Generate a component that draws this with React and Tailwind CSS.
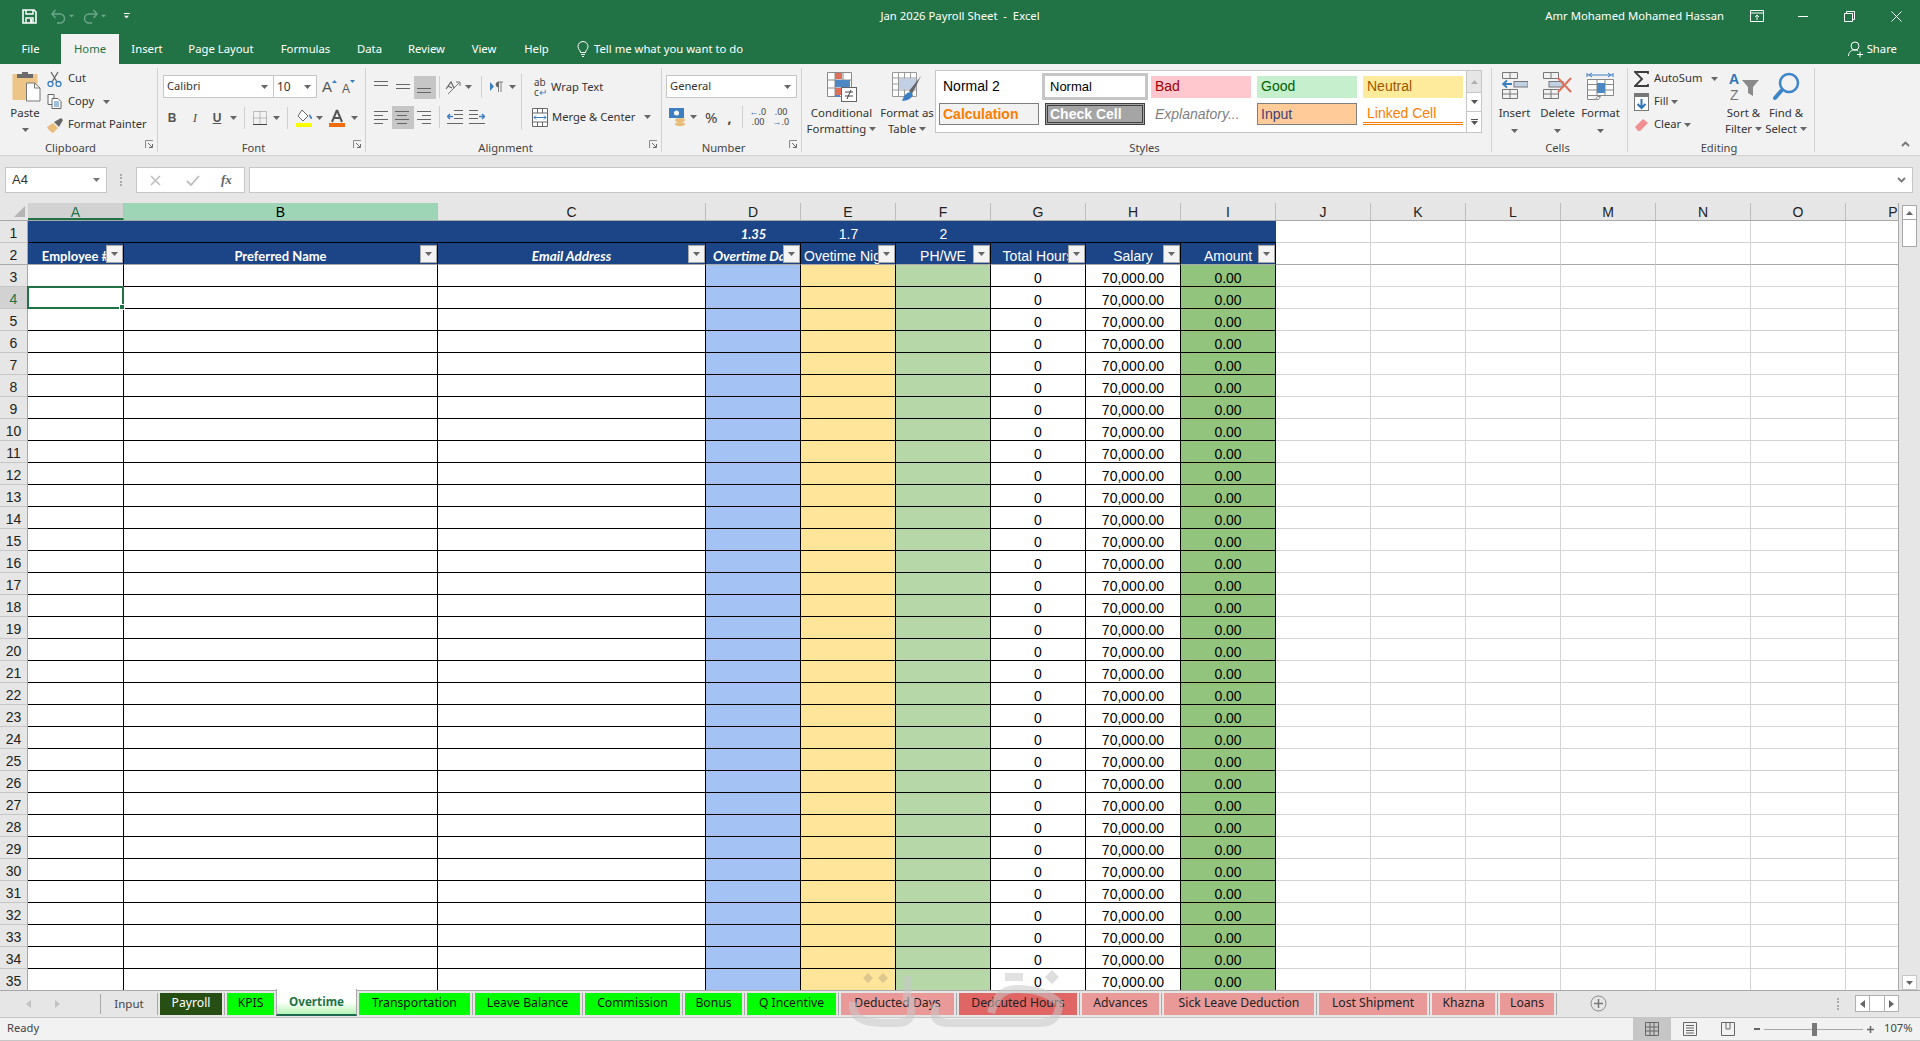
import React from "react";

const Caret = ({ c = "#666", className = "" }) => (
  <svg width="7" height="4" viewBox="0 0 7 4" className={"shrink-0 " + className}><path d="M0 0h7L3.500 4z" fill={c} /></svg>
);

const Launcher = () => (
  <svg width="9" height="9" viewBox="0 0 9 9" className="absolute right-[3px] bottom-[3px]">
    <path d="M0.500 8V0.500H8" fill="none" stroke="#8a8a8a" /><path d="M3 3l4 4M4 7.500h3.500V4" fill="none" stroke="#6a6a6a" />
  </svg>
);

const Group = ({ w, label, children }) => {
  const launch = label !== "Styles" && label !== "Cells" && label !== "Editing";
  return (
    <div className="flex shrink-0 h-[84px]">
      <div className={"relative flex flex-col " + w}>
        <div className="h-[72px] shrink-0">{children}</div>
        <div className={"shrink-0 h-[16px] text-center text-[11.2px] leading-[16px] text-[#444] " + (launch ? "pr-[16px]" : "pr-[4px]")}>{label}</div>
        {launch ? <Launcher /> : null}
      </div>
      <div className="w-px h-[84px] bg-[#d2d2d2]" />
    </div>
  );
};

const Sep = ({ className = "" }) => <div className={"w-px h-[22px] bg-[#d0d0d0] shrink-0 " + className} />;

const Lines = ({ rows }) => (
  <svg width="16" height="14" viewBox="0 0 16 14">
    {rows.map((r, i) => <rect key={i} x={r[0]} y={r[1]} width={r[2]} height="1" fill="#666" />)}
  </svg>
);

const Save = () => (
  <svg width="15" height="15" viewBox="0 0 15 15"><path d="M1 1h11l2 2v11H1z" fill="none" stroke="#fff" strokeWidth="1.600" /><path d="M4 1v4h7V1M4 14V9h7v5" fill="none" stroke="#fff" strokeWidth="1.400" /><rect x="8" y="10" width="2" height="4" fill="#fff" /></svg>
);
const Undo = ({ flip }) => (
  <svg width="15" height="15" viewBox="0 0 15 15" className={flip ? "-scale-x-100" : ""}><path d="M1 5h8a4.500 4.500 0 0 1 0 9H6" fill="none" stroke="#6fa78c" strokeWidth="1.400" /><path d="M4.500 1L1 5l3.500 4" fill="none" stroke="#6fa78c" strokeWidth="1.400" /></svg>
);

const PasteIcon = () => (
  <svg width="30" height="30" viewBox="0 0 30 30">
    <rect x="0.500" y="2" width="25" height="26" rx="1" fill="#edc587" />
    <rect x="5" y="2" width="16" height="4" fill="#6b6b6b" /><rect x="10" y="0" width="6" height="3" fill="#6b6b6b" />
    <path d="M14.500 11h8l5.500 5v13h-13.500z" fill="#fff" stroke="#777" /><path d="M22.500 11v5h5.500" fill="none" stroke="#777" />
  </svg>
);
const Scissors = () => (
  <svg width="15" height="16" viewBox="0 0 15 16"><path d="M4 1l6 10M11 1L5 11" stroke="#666" strokeWidth="1.300" /><circle cx="3.500" cy="13" r="2.500" fill="none" stroke="#3c7fc0" strokeWidth="1.300" /><circle cx="11.500" cy="13" r="2.500" fill="none" stroke="#3c7fc0" strokeWidth="1.300" /></svg>
);
const CopyIcon = () => (
  <svg width="15" height="15" viewBox="0 0 15 15"><path d="M1 .5h6v10H1z" fill="#fff" stroke="#666" /><path d="M5 4.500h6l3 3v7H5z" fill="#fff" stroke="#666" /><path d="M7 8h5M7 10h5M7 12h5" stroke="#3c7fc0" /></svg>
);
const Brush = () => (
  <svg width="17" height="16" viewBox="0 0 17 16"><path d="M0 10l6-4 5 5-5 5c-2-1-5-3-6-6z" fill="#e8bd7a" /><path d="M7 5l5 5 4-7-2-2z" fill="#666" /></svg>
);
const Grow = ({ up }) => (
  <span className="flex items-start">
    <span className={"font-['Liberation_Sans',sans-serif] leading-none text-[#555] " + (up ? "text-[15px]" : "text-[12px] mt-[4px]")}>A</span>
    <svg width="5" height="3" viewBox="0 0 5 3" className="mt-[1px]"><path d={up ? "M0 3h5L2.500 0z" : "M0 0h5L2.500 3z"} fill="#3c7fc0" /></svg>
  </span>
);
const Borders = () => (
  <svg width="14" height="14" viewBox="0 0 14 14"><path d="M.5 .5h13v13h-13zM7 .5v13M.5 7h13" fill="none" stroke="#888" strokeDasharray="1 1" /><path d="M0 13.500h14" stroke="#444" /></svg>
);
const Fill = () => (
  <svg width="17" height="19" viewBox="0 0 17 19"><path d="M6 1l6 6-5 5-5-5z" fill="#fff" stroke="#666" /><path d="M13 5c2 1 3 3 3 5-2 0-3-2-3-5z" fill="#3c7fc0" /><rect x="0" y="14" width="16" height="4" fill="#ffff00" /></svg>
);
const FontColor = () => (
  <svg width="17" height="19" viewBox="0 0 17 19"><path d="M8 1L3 13M8 1l5 12M5 9h6" fill="none" stroke="#555" strokeWidth="2" /><rect x="0" y="14" width="16" height="4" fill="#f26b0f" /></svg>
);
const Orient = () => (
  <svg width="17" height="15" viewBox="0 0 17 15"><path d="M1 9l5-7 3 6M3 6l4 2" fill="none" stroke="#666" strokeWidth="1.200" /><path d="M3 14L14 3" stroke="#777" /><path d="M11 2h4v4" fill="none" stroke="#777" /></svg>
);
const Rtl = () => (
  <svg width="14" height="12" viewBox="0 0 14 12"><path d="M0 1v9l4-4.500z" fill="#3c7fc0" /><path d="M8 1h5M11 1v10M8.500 1v10M6 3.500a2.500 2.500 0 0 1 2.500-2.500v5A2.500 2.500 0 0 1 6 3.500z" fill="#666" stroke="#666" strokeWidth="0.800" /></svg>
);
const Outdent = ({ flip }) => (
  <svg width="16" height="14" viewBox="0 0 16 14" className={flip ? "-scale-x-100" : ""}><path d="M7 .5h9M7 4.500h9M7 8.500h9M0 13.500h16" stroke="#666" /><path d="M0 6.500h6M3 4L.5 6.500 3 9" fill="none" stroke="#3c7fc0" strokeWidth="1.500" /></svg>
);
const Wrap = () => (
  <span className="w-[14px] flex flex-col text-[10px] leading-[10px] text-[#444]"><span>ab</span><span>c<span className="text-[#3c7fc0]">↵</span></span></span>
);
const Merge = () => (
  <svg width="16" height="19" viewBox="0 0 16 19"><path d="M.5 .5h15v18H.5zM.5 5h15M.5 14h15M5.500 .5V5M10.500 .5V5M5.500 14v4.500M10.500 14v4.500" fill="#fff" stroke="#666" /><path d="M2 9.500h12M4 7.500l-2 2 2 2M12 7.500l2 2-2 2" fill="none" stroke="#3c7fc0" /></svg>
);
const Money = () => (
  <svg width="17" height="19" viewBox="0 0 17 19"><rect x="0" y="0" width="15" height="10" fill="#3c7fc0" /><circle cx="7.500" cy="5" r="2.500" fill="#fff" /><ellipse cx="11" cy="12" rx="5" ry="2" fill="#e8bd7a" /><ellipse cx="11" cy="16" rx="5" ry="2" fill="#e8bd7a" /></svg>
);
const Cond = () => (
  <svg width="30" height="30" viewBox="0 0 30 30">
    <path d="M.5 .5h24v24H.5zM8 .5v24M16 .5v24M.5 8h24M.5 16h24" fill="#fff" stroke="#8a8a8a" />
    <rect x="8" y="1" width="7" height="6" fill="#e0705a" /><rect x="8" y="8" width="15" height="7" fill="#4d87c4" /><rect x="8" y="16" width="7" height="7" fill="#e0705a" /><rect x="8" y="23" width="5" height="2" fill="#4d87c4" />
    <rect x="14.500" y="15.500" width="15" height="14" fill="#fff" stroke="#666" /><path d="M18 20h8M18 24h8M24 18l-4 9" stroke="#444" />
  </svg>
);
const FmtTable = () => (
  <svg width="30" height="30" viewBox="0 0 30 30">
    <path d="M.5 .5h24v24H.5zM.5 6h24M.5 12h24M.5 18h24M6.500 .5v24M12.500 .5v24M18.500 .5v24" fill="#fff" stroke="#999" />
    <rect x="7" y="6.500" width="17" height="11" fill="#c2d0e6" />
    <path d="M29 4L17 19l3 3z" fill="#666" /><path d="M10 29c2-6 5-9 9-9l2 3c-1 3-6 6-11 6z" fill="#3c7fc0" />
  </svg>
);
const InsertI = () => (
  <svg width="26" height="27" viewBox="0 0 26 27">
    <path d="M.5 .5h15v6h-15zM8 .5v6M.5 17.500h15v9h-15zM.5 22h15M8 17.500v9" fill="none" stroke="#777" />
    <rect x="12" y="9.500" width="14" height="5.500" fill="#c2d0e6" stroke="#777" />
    <path d="M1 12h9M5 8.500L1 12l4 3.500" fill="none" stroke="#3c7fc0" strokeWidth="1.800" />
  </svg>
);
const DeleteI = () => (
  <svg width="30" height="27" viewBox="0 0 30 27">
    <path d="M.5 .5h15v6h-15zM8 .5v6M.5 17.500h15v9h-15zM.5 22h15M8 17.500v9" fill="none" stroke="#777" />
    <rect x="6" y="9.500" width="14" height="5.500" fill="#c2d0e6" stroke="#777" />
    <path d="M15 6l13 14M28 6L15 20" stroke="#e0705a" strokeWidth="2" />
  </svg>
);
const FormatI = () => (
  <svg width="29" height="28" viewBox="0 0 29 28">
    <path d="M1 3h26M1 1v4M27 1v4M3 3l3-2M3 3l3 2M25 3l-3-2M25 3l-3 2" fill="none" stroke="#3c7fc0" />
    <path d="M1.500 7.500h26v16h-26zM11 7.500v16M19 7.500v16M1.500 12.500h26M1.500 18h26M1.500 23.500v4h8l2-3h3l-2 3h-3" fill="#fff" stroke="#888" />
    <rect x="11" y="11" width="8" height="10" fill="#4d87c4" />
  </svg>
);
const Sigma = () => (
  <svg width="15" height="16" viewBox="0 0 15 16"><path d="M14 3V1H1l7 7-7 7h13v-2" fill="none" stroke="#3c3c3c" strokeWidth="1.800" /></svg>
);
const FillD = () => (
  <svg width="15" height="18" viewBox="0 0 15 18"><rect x=".5" y=".5" width="14" height="17" fill="#fff" stroke="#777" /><rect x="1" y="1" width="13" height="3" fill="#777" /><path d="M7.500 6v9M3.500 11l4 4 4-4" fill="none" stroke="#2e75b6" strokeWidth="2" /></svg>
);
const Eraser = () => (
  <svg width="15" height="14" viewBox="0 0 15 14"><path d="M1 9l8-8 5 4-8 8H4z" fill="#ef8f8f" /></svg>
);
const SortI = () => (
  <svg width="30" height="29" viewBox="0 0 30 29">
    <text x="0" y="12" fontSize="14" fontWeight="700" fontFamily="Liberation Sans" fill="#2e75b6">A</text>
    <text x="1" y="28" fontSize="14" fontFamily="Liberation Sans" fill="#777">Z</text>
    <path d="M13 8h17l-6 7v9l-5-3v-6z" fill="#8a8a8a" />
  </svg>
);
const FindI = () => (
  <svg width="27" height="29" viewBox="0 0 27 29"><circle cx="16" cy="11" r="9" fill="none" stroke="#3c85c8" strokeWidth="2.500" /><path d="M9 18L2 26" stroke="#3c85c8" strokeWidth="4" strokeLinecap="round" /></svg>
);
const Chevron = ({ up }) => (
  <svg width="9" height="6" viewBox="0 0 9 6"><path d={up ? "M1 5l3.500-3.500L8 5" : "M1 1l3.500 3.500L8 1"} fill="none" stroke="#777" strokeWidth="1.800" /></svg>
);

function Ribbon() {
  return (
    <div className="flex h-[92px] pt-[4px] bg-[#f2f2f2] border-b border-[#d2d2d2] text-[11.2px] text-[#333] relative">
      <Group w="w-[157px]" label="Clipboard">
        <div className="flex">
          <div className="w-[47px] flex flex-col items-center pl-[6px]">
            <div className="mt-[4px]"><PasteIcon /></div>
            <div className="mt-[3px] -ml-[3px] text-[11.4px] leading-[16px]">Paste</div>
            <Caret className="mt-[7px] -ml-[3px]" />
          </div>
          <div className="flex flex-col -mt-[1px]">
            <div className="h-[23px] flex items-center"><span className="w-[21px] flex"><Scissors /></span>Cut</div>
            <div className="h-[23px] flex items-center"><span className="w-[21px] flex"><CopyIcon /></span>Copy<Caret className="ml-[9px]" /></div>
            <div className="h-[23px] flex items-center"><span className="w-[21px] flex"><Brush /></span>Format Painter</div>
          </div>
        </div>
      </Group>
      <Group w="w-[207px]" label="Font">
        <div className="flex flex-col pt-[7px] pl-[5px]">
          <div className="flex items-center h-[23px]">
            <div className="w-[111px] h-[23px] bg-white border border-[#c6c6c6] flex items-center justify-between pl-[3px] pr-[5px]">Calibri<Caret /></div>
            <div className="w-[43px] h-[23px] bg-white border border-l-0 border-[#c6c6c6] flex items-center justify-between pl-[3px] pr-[5px] text-[12px]">10<Caret /></div>
            <div className="ml-[5px] w-[21px]"><Grow up /></div>
            <div className="-ml-[1px]"><Grow /></div>
          </div>
          <div className="flex items-center h-[22px] mt-[9px]">
            <span className="w-[20px] -ml-[1px] text-center font-bold text-[12px] font-['Liberation_Sans',sans-serif] text-[#555]">B</span>
            <span className="w-[24px] ml-[1px] text-center italic text-[13px] font-['Liberation_Serif',serif] text-[#555]">I</span>
            <span className="w-[20px] text-center underline font-bold text-[12px] font-['Liberation_Sans',sans-serif] text-[#555]">U</span>
            <Caret className="ml-[3px]" />
            <Sep className="ml-[7px]" />
            <span className="ml-[8px] flex"><Borders /></span>
            <Caret className="ml-[6px]" />
            <Sep className="ml-[7px]" />
            <span className="ml-[8px] flex"><Fill /></span>
            <Caret className="ml-[3px]" />
            <span className="ml-[6px] flex"><FontColor /></span>
            <Caret className="ml-[5px]" />
          </div>
        </div>
      </Group>
      <Group w="w-[295px]" label="Alignment">
        <div className="flex pl-[8px]">
          <div className="flex flex-col">
            <div className="flex items-center h-[24px] mt-[7px]">
              <span className="w-[22px] flex"><Lines rows={[[0, 1, 14], [0, 5, 14]]} /></span>
              <span className="w-[18px] flex"><Lines rows={[[0, 4, 14], [0, 8, 14]]} /></span>
              <span className="w-[22px] h-[23px] bg-[#c6c6c6] flex items-center justify-center"><Lines rows={[[0, 8, 14], [0, 12, 14]]} /></span>
              <Sep className="ml-[3px]" />
              <span className="ml-[5px] flex"><Orient /></span>
              <Caret className="ml-[3px]" />
              <Sep className="ml-[9px]" />
              <span className="ml-[8px] flex"><Rtl /></span>
              <Caret className="ml-[5px]" />
            </div>
            <div className="flex items-center h-[24px] mt-[6px]">
              <span className="w-[18px] flex"><Lines rows={[[0, 1, 14], [0, 5, 9], [0, 9, 14], [0, 13, 9]]} /></span>
              <span className="w-[22px] h-[23px] bg-[#c6c6c6] flex items-center justify-center"><Lines rows={[[0, 1, 14], [2, 5, 10], [0, 9, 14], [2, 13, 10]]} /></span>
              <span className="w-[22px] pl-[3px] flex"><Lines rows={[[0, 1, 14], [5, 5, 9], [0, 9, 14], [5, 13, 9]]} /></span>
              <Sep className="ml-[3px]" />
              <span className="ml-[7px] flex"><Outdent /></span>
              <span className="ml-[6px] flex"><Outdent flip /></span>
            </div>
          </div>
          <div className="flex flex-col ml-[9px] relative">
            <div className="w-px h-[56px] bg-[#d0d0d0] absolute -left-[4px] top-[6px]" />
            <div className="flex items-center h-[24px] mt-[7px] pl-[9px]"><Wrap /><span className="ml-[3px] leading-none whitespace-nowrap">Wrap Text</span></div>
            <div className="flex items-center h-[24px] mt-[6px] pl-[7px]"><Merge /><span className="ml-[4px] whitespace-nowrap">Merge &amp; Center</span><Caret className="ml-[9px]" /></div>
          </div>
        </div>
      </Group>
      <Group w="w-[139px]" label="Number">
        <div className="flex flex-col pt-[7px] pl-[4px]">
          <div className="w-[131px] h-[23px] bg-white border border-[#c6c6c6] flex items-center justify-between pl-[3px] pr-[5px]">General<Caret /></div>
          <div className="flex items-center h-[22px] mt-[8px] pl-[3px]">
            <Money /><Caret className="ml-[4px]" />
            <span className="ml-[8px] text-[15px] text-[#444]">%</span>
            <span className="ml-[10px] font-bold text-[14px] text-[#444]">,</span>
            <Sep className="ml-[11px]" />
            <span className="ml-[6px] text-[9px] leading-[10px] text-right text-[#444] w-[15px]"><span className="text-[#3c7fc0]">←</span>.0<br />.00</span>
            <span className="ml-[8px] text-[9px] leading-[10px] text-right text-[#444] w-[15px]">.00<br /><span className="text-[#3c7fc0]">→</span>.0</span>
          </div>
        </div>
      </Group>
      <Group w="w-[689px]" label="Styles">
        <div className="flex">
          <div className="w-[79px] flex flex-col items-center leading-[16px] text-[11.4px]">
            <div className="mt-[4px] h-[33px]"><Cond /></div>
            <div className="text-center whitespace-nowrap">Conditional<br />Formatting<Caret className="inline-block ml-[3px] mb-[2px]" /></div>
          </div>
          <div className="w-[52px] flex flex-col items-center leading-[16px] text-[11.4px]">
            <div className="mt-[4px] h-[33px]"><FmtTable /></div>
            <div className="text-center whitespace-nowrap">Format as<br />Table<Caret className="inline-block ml-[3px] mb-[2px]" /></div>
          </div>
          <div className="ml-[2px] mt-[2px] w-[547px] h-[63px] bg-white border border-[#c6c6c6] flex">
            <div className="flex flex-col w-[531px] pl-[3px] font-['Liberation_Sans',sans-serif] text-[14px]">
              <div className="flex items-center h-[30px] pt-[1px]">
                <div className="w-[103px] h-[22px] flex items-center pl-[4px] text-black">Normal 2</div>
                <div className="w-[106px] h-[27px] border-[3px] border-[#c6c6c6] flex items-center pl-[5px] text-black text-[13px]">Normal</div>
                <div className="ml-[3px] w-[100px] h-[22px] bg-[#ffc7ce] text-[#9c0006] flex items-center pl-[4px]">Bad</div>
                <div className="ml-[6px] w-[100px] h-[22px] bg-[#c6efce] text-[#006100] flex items-center pl-[4px]">Good</div>
                <div className="ml-[6px] w-[100px] h-[22px] bg-[#ffeb9c] text-[#9c5700] flex items-center pl-[4px]">Neutral</div>
              </div>
              <div className="flex items-center h-[24px] mt-[1px]">
                <div className="w-[100px] h-[22px] bg-[#f2f2f2] border border-[#7f7f7f] text-[#fa7d00] font-bold flex items-center pl-[3px]">Calculation</div>
                <div className="ml-[6px] w-[100px] h-[22px] bg-[#a5a5a5] border-[3px] border-double border-[#3f3f3f] text-white font-bold flex items-center pl-[2px]">Check Cell</div>
                <div className="w-[112px] h-[22px] text-[#7f7f7f] italic flex items-center pl-[10px]">Explanatory...</div>
                <div className="w-[100px] h-[22px] bg-[#ffcc99] border border-[#7f7f7f] text-[#3f3f76] flex items-center pl-[3px]">Input</div>
                <div className="ml-[6px] w-[100px] h-[22px] border-b-[3px] border-double border-[#fa7d00] text-[#fa7d00] flex items-center pl-[4px] pt-[2px]">Linked Cell</div>
              </div>
            </div>
            <div className="w-[15px] flex flex-col border-l border-[#c6c6c6]">
              <div className="h-[21px] bg-[#e6e6e6] flex items-center justify-center"><Caret c="#b0b0b0" className="rotate-180" /></div>
              <div className="h-[20px] border-y border-[#c6c6c6] flex items-center justify-center"><Caret c="#555" /></div>
              <div className="h-[20px] flex flex-col items-center justify-center"><div className="w-[7px] h-px bg-[#555] mb-[1px]" /><Caret c="#555" /></div>
            </div>
          </div>
        </div>
      </Group>
      <Group w="w-[135px]" label="Cells">
        <div className="flex pl-[1px] leading-[16px] text-[11.4px]">
          <div className="w-[43px] flex flex-col items-center"><div className="mt-[4px] h-[33px]"><InsertI /></div>Insert<Caret className="mt-[8px]" /></div>
          <div className="w-[43px] flex flex-col items-center"><div className="mt-[4px] h-[33px]"><DeleteI /></div>Delete<Caret className="mt-[8px]" /></div>
          <div className="w-[43px] flex flex-col items-center"><div className="mt-[4px] h-[33px]"><FormatI /></div>Format<Caret className="mt-[8px]" /></div>
        </div>
      </Group>
      <Group w="w-[186px]" label="Editing">
        <div className="flex">
          <div className="flex flex-col pl-[6px] w-[94px] -mt-[1px]">
            <div className="h-[23px] flex items-center"><span className="w-[20px] flex"><Sigma /></span>AutoSum<Caret className="ml-[9px]" /></div>
            <div className="h-[23px] flex items-center"><span className="w-[20px] flex"><FillD /></span>Fill<Caret className="ml-[3px]" /></div>
            <div className="h-[23px] flex items-center"><span className="w-[20px] flex"><Eraser /></span>Clear<Caret className="ml-[3px]" /></div>
          </div>
          <div className="w-[43px] flex flex-col items-center leading-[16px] text-[11.4px]"><div className="mt-[4px] h-[33px]"><SortI /></div><div className="text-center whitespace-nowrap">Sort &amp;<br />Filter<Caret className="inline-block ml-[3px] mb-[2px]" /></div></div>
          <div className="w-[42px] flex flex-col items-center leading-[16px] text-[11.4px]"><div className="mt-[4px] h-[33px]"><FindI /></div><div className="text-center whitespace-nowrap">Find &amp;<br />Select<Caret className="inline-block ml-[3px] mb-[2px]" /></div></div>
        </div>
      </Group>
      <div className="ml-auto self-end mb-[8px] mr-[10px]"><Chevron up /></div>
    </div>
  );
}

const ribbonTabs = [
  ["File", "w-[61px]"], ["Home", "w-[58px]"], ["Insert", "w-[56px]"], ["Page Layout", "w-[92px]"], ["Formulas", "w-[77px]"],
  ["Data", "w-[51px]"], ["Review", "w-[63px]"], ["View", "w-[52px]"], ["Help", "w-[53px]"],
];

function TitleBar() {
  return (
    <div className="bg-[#217346] text-white h-[64px] shrink-0 text-[11.3px]">
      <div className="grid grid-cols-[1fr_auto_1fr] items-center h-[34px]">
        <div className="flex items-center pl-[22px] pb-[2px]">
          <Save />
          <span className="ml-[14px] flex"><Undo /></span><Caret c="#6fa78c" className="ml-[2px] scale-75" />
          <span className="ml-[8px] flex"><Undo flip /></span><Caret c="#6fa78c" className="ml-[2px] scale-75" />
          <span className="ml-[16px] flex flex-col items-center"><span className="w-[6px] h-px bg-white mb-[1px]" /><Caret c="#fff" className="scale-75" /></span>
        </div>
        <div className="pb-[2px] whitespace-pre">Jan 2026 Payroll Sheet  -  Excel</div>
        <div className="flex items-center justify-end pb-[2px]">
          <span>Amr Mohamed Mohamed Hassan</span>
          <svg width="14" height="12" viewBox="0 0 14 12" className="ml-[26px]"><path d="M.5 .5h13v11H.5zM.5 3h13M7 10V5M5 7l2-2 2 2" fill="none" stroke="#fff" /></svg>
          <span className="ml-[34px] w-[10px] h-px bg-white" />
          <svg width="11" height="11" viewBox="0 0 11 11" className="ml-[36px]"><path d="M.5 2.500h8v8h-8zM2.500 2.500v-2h8v8h-2" fill="none" stroke="#fff" /></svg>
          <svg width="11" height="11" viewBox="0 0 11 11" className="ml-[36px] mr-[18px]"><path d="M.5 .5l10 10M10.500 .5l-10 10" stroke="#fff" /></svg>
        </div>
      </div>
      <div className="flex items-center h-[30px]">
        {ribbonTabs.map(([t, w]) => (
          <div key={t} className={w + " h-[30px] flex items-center justify-center " + (t === "Home" ? "bg-[#f2f2f2] text-[#217346]" : "")}>{t}</div>
        ))}
        <svg width="12" height="17" viewBox="0 0 12 17" className="ml-[14px]"><path d="M3.500 11.500C3.500 9 1 8.500 1 5.500a5 5 0 0 1 10 0c0 3-2.500 3.500-2.500 6zM4 13.500h4M5 15.500h2" fill="none" stroke="#fff" /></svg>
        <span className="ml-[5px]">Tell me what you want to do</span>
        <div className="ml-auto flex items-center pr-[23px]">
          <svg width="15" height="17" viewBox="0 0 15 17"><circle cx="7" cy="5" r="4" fill="none" stroke="#fff" /><path d="M.5 15c0-4 3-6 6.500-6 1 0 2 .2 3 .8M9 13.500h6M12 10.500v6" fill="none" stroke="#fff" /></svg>
          <span className="ml-[4px]">Share</span>
        </div>
      </div>
    </div>
  );
}

function FormulaBar() {
  return (
    <div className="h-[47px] bg-[#e6e6e6] flex pt-[11px] shrink-0 font-['Liberation_Sans',sans-serif]">
      <div className="ml-[5px] w-[102px] h-[26px] bg-white border border-[#c6c6c6] flex items-center justify-between pl-[6px] pr-[6px] text-[13px] text-[#333]">A4<Caret c="#777" /></div>
      <div className="ml-[13px] w-[3px] h-[12px] mt-[7px] border-l-2 border-dotted border-[#aaa]" />
      <div className="ml-[13px] w-[109px] h-[26px] bg-white border border-[#c6c6c6] flex items-center">
        <svg width="11" height="11" viewBox="0 0 11 11" className="ml-[13px]"><path d="M1 1l9 9M10 1l-9 9" stroke="#bdbdbd" strokeWidth="1.500" /></svg>
        <svg width="14" height="11" viewBox="0 0 14 11" className="ml-[25px]"><path d="M1 6l4 4 8-9" fill="none" stroke="#bdbdbd" strokeWidth="1.800" /></svg>
        <span className="ml-[21px] italic text-[13px] font-['Liberation_Serif',serif] text-[#666] font-bold">fx</span>
      </div>
      <div className="ml-[4px] w-[1664px] h-[26px] bg-white border border-[#c6c6c6] flex items-center justify-end pr-[6px]"><Chevron /></div>
    </div>
  );
}

const colHeads = [
  ["A", "w-[96px] bg-[#d2d2d2] text-[#217346] border-b-2 border-b-[#217346]"],
  ["B", "w-[314px] bg-[#9fd5b7] text-black"],
  ["C", "w-[268px]"], ["D", "w-[95px]"], ["E", "w-[95px]"], ["F", "w-[95px]"], ["G", "w-[95px]"], ["H", "w-[95px]"], ["I", "w-[95px]"],
  ["J", "w-[95px]"], ["K", "w-[95px]"], ["L", "w-[95px]"], ["M", "w-[95px]"], ["N", "w-[95px]"], ["O", "w-[95px]"], ["P", "w-[95px]"],
];
const extra = ["J", "K", "L", "M", "N", "O", "P"];

const Filter = () => (
  <span className="absolute right-0 top-[2px] w-[17px] h-[18px] bg-[#f3f3f3] border border-[#a8a8a8] flex items-center justify-center z-[1]"><Caret c="#666" /></span>
);

const headers = [
  ["Employee #", "w-[96px] text-center text-[13px] font-['Lato',sans-serif] font-bold"],
  ["Preferred Name", "w-[314px] text-center text-[13px] font-['Lato',sans-serif] font-bold"],
  ["Email Address", "w-[268px] text-center text-[13.5px] font-['Lato',sans-serif] font-bold italic"],
  ["Overtime Days", "w-[95px] pl-[7px] text-[13.5px] font-['Lato',sans-serif] font-bold italic"],
  ["Ovetime Nights", "w-[95px] pl-[3px]"],
  ["PH/WE", "w-[95px] text-center"],
  ["Total Hours", "w-[95px] text-center"],
  ["Salary", "w-[95px] text-center"],
  ["Amount", "w-[95px] text-center"],
];

const bodyCols = [
  ["w-[96px] bg-white", ""], ["w-[314px] bg-white", ""], ["w-[268px] bg-white", ""],
  ["w-[95px] bg-[#a4c2f4]", ""], ["w-[95px] bg-[#ffe599]", ""], ["w-[95px] bg-[#b6d7a8]", ""],
  ["w-[95px] bg-white", "0"], ["w-[95px] bg-white", "70,000.00"], ["w-[95px] bg-[#93c47d]", "0.00"],
];

const RowHead = ({ n, sel, line = "border-b-[#c6c6c6]" }) => (
  <div className={"w-[28px] shrink-0 border-r border-r-[#a8a8a8] border-b flex items-end justify-center pb-[1px] " + line + " " + (sel ? "bg-[#d2d2d2] text-[#217346]" : "bg-[#e6e6e6] text-[#222]")}>{n}</div>
);

function Sheet() {
  const rows = [];
  for (let n = 3; n <= 35; n++) rows.push(n);
  return (
    <div className="flex-1 flex min-h-0 bg-[#e6e6e6] font-['Liberation_Sans',Arial,sans-serif] text-[14px] leading-[16px]">
      <div className="w-[1899px] overflow-hidden border-r border-[#a8a8a8] bg-white">
        <div className="flex h-[18px] bg-[#e6e6e6] border-b border-[#a8a8a8]">
          <div className="w-[28px] shrink-0 flex items-end justify-end pr-[3px] pb-[3px]">
            <svg width="11" height="11" viewBox="0 0 11 11"><path d="M11 0v11H0z" fill="#b5b5b5" /></svg>
          </div>
          {colHeads.map(([c, k]) => (
            <div key={c} className={"shrink-0 text-center border-r border-r-[#bdbdbd] text-[#222] leading-[19px] " + k}>{c}</div>
          ))}
        </div>
        <div className="flex h-[22px]">
          <RowHead n={1} />
          <div className="w-[1248px] shrink-0 bg-[#1c4587] flex text-white border-b border-black">
            <div className="w-[678px]" />
            <div className="w-[95px] text-center pt-[5px] text-[13px] font-['Lato',sans-serif] font-bold italic">1.35</div>
            <div className="w-[95px] text-center pt-[5px]">1.7</div>
            <div className="w-[95px] text-center pt-[5px]">2</div>
          </div>
          {extra.map((c) => <div key={c} className="w-[95px] shrink-0 border-r border-b border-[#d4d4d4]" />)}
        </div>
        <div className="flex h-[22px]">
          <RowHead n={2} line="border-b-[#a8a8a8]" />
          {headers.map(([t, k]) => (
            <div key={t} className={"relative shrink-0 bg-[#1c4587] text-white whitespace-nowrap overflow-hidden border-r border-r-black border-b border-b-[#a8a8a8] pt-[5px] " + k}>
              {t}
              <Filter />
            </div>
          ))}
          {extra.map((c) => <div key={c} className="w-[95px] shrink-0 border-r border-r-[#d4d4d4] border-b border-b-[#a8a8a8]" />)}
        </div>
        {rows.map((n) => (
          <div key={n} className="flex h-[22px]">
            <RowHead n={n} sel={n === 4} />
            {bodyCols.map(([k, t], i) => (
              <div key={i} className={"relative shrink-0 text-center border-r border-b border-black pt-[5px] text-black " + k}>
                {t}
                {n === 4 && i === 0 ? (
                  <span className="absolute -left-[1px] -top-[1px] w-[97px] h-[23px] border-2 border-[#217346] z-[2]">
                    <span className="absolute -right-[3px] -bottom-[3px] w-[6px] h-[6px] bg-[#217346] border border-white" />
                  </span>
                ) : null}
              </div>
            ))}
            {extra.map((c) => <div key={c} className="w-[95px] shrink-0 border-r border-b border-[#d4d4d4]" />)}
          </div>
        ))}
      </div>
      <div className="w-[21px] flex flex-col items-center pt-[2px] pl-[3px] pr-[3px]">
        <div className="w-[15px] h-[15px] bg-white border border-[#a8a8a8] flex items-center justify-center"><Caret c="#666" className="rotate-180" /></div>
        <div className="w-[15px] h-[27px] bg-white border border-t-0 border-[#a8a8a8]" />
        <div className="flex-1" />
        <div className="w-[15px] h-[15px] bg-white border border-[#c6c6c6] flex items-center justify-center"><Caret c="#666" /></div>
      </div>
    </div>
  );
}

const sheetTabs = [
  ["Payroll", "w-[62px] bg-[#274e13] text-white"],
  ["KPIS", "w-[47px] bg-[#00ff00] text-[#111]"],
  ["Overtime", ""],
  ["Transportation", "w-[111px] bg-[#00ff00] text-[#111]"],
  ["Leave Balance", "w-[105px] bg-[#00ff00] text-[#111]"],
  ["Commission", "w-[95px] bg-[#00ff00] text-[#111]"],
  ["Bonus", "w-[57px] bg-[#00ff00] text-[#111]"],
  ["Q Incentive", "w-[89px] bg-[#00ff00] text-[#111]"],
  ["Deducted Days", "w-[113px] bg-[#ea9999] text-[#222]"],
  ["Dedcuted Hours", "w-[118px] bg-[#e06666] text-[#222]"],
  ["Advances", "w-[77px] bg-[#ea9999] text-[#222]"],
  ["Sick Leave Deduction", "w-[150px] bg-[#ea9999] text-[#222]"],
  ["Lost Shipment", "w-[108px] bg-[#ea9999] text-[#222]"],
  ["Khazna", "w-[63px] bg-[#ea9999] text-[#222]"],
  ["Loans", "w-[54px] bg-[#ea9999] text-[#222]"],
];

function TabBar() {
  return (
    <div className="h-[28px] shrink-0 bg-[#e6e6e6] border-t border-[#a8a8a8] border-b border-b-[#c6c6c6] flex items-center text-[12.2px] pb-[1px]">
      <div className="w-[100px] flex items-center pl-[26px] text-[#c6c6c6]">
        <svg width="5" height="8" viewBox="0 0 5 8"><path d="M5 0v8L0 4z" fill="#c2c2c2" /></svg>
        <svg width="5" height="8" viewBox="0 0 5 8" className="ml-[24px]"><path d="M0 0v8l5-4z" fill="#c2c2c2" /></svg>
      </div>
      <div className="w-px h-[20px] bg-[#a8a8a8]" />
      <div className="w-[56px] text-center text-[#444] text-[11.5px]">Input</div>
      <div className="w-px h-[22px] bg-[#a8a8a8]" />
      <div className="w-[2px]" />
      {sheetTabs.map(([t, k]) => (
        <React.Fragment key={t}>
          {t === "Overtime" ? (
            <div className="relative w-[81px] h-[27px] -mt-[2px] -mx-[3px] z-[1] bg-linear-to-b from-white from-50% to-[#b6f5b6] border-x border-[#a8a8a8] border-b-2 border-b-[#1f6b52] text-[#217346] font-bold text-[11.7px] flex items-center justify-center pt-[1px]">{t}</div>
          ) : (
            <div className={"h-[22px] flex items-center justify-center whitespace-nowrap " + k}>{t}</div>
          )}
          <div className="w-[5px] flex justify-center"><div className="w-px h-[22px] bg-[#a8a8a8]" /></div>
        </React.Fragment>
      ))}
      <svg width="17" height="17" viewBox="0 0 17 17" className="ml-[31px]"><circle cx="8.500" cy="8.500" r="7.500" fill="none" stroke="#8a8a8a" /><path d="M8.500 4v9M4 8.500h9" stroke="#777" strokeWidth="1.500" /></svg>
      <div className="ml-[230px] w-[2px] h-[12px] border-l-2 border-dotted border-[#aaa]" />
      <div className="ml-[16px] flex">
        <div className="w-[15px] h-[17px] bg-white border border-[#b0b0b0] flex items-center justify-center"><svg width="5" height="8" viewBox="0 0 5 8"><path d="M5 0v8L0 4z" fill="#666" /></svg></div>
        <div className="w-[14px] h-[17px] bg-white border-y border-[#b0b0b0]" />
        <div className="w-[15px] h-[17px] bg-white border border-[#b0b0b0] flex items-center justify-center"><svg width="5" height="8" viewBox="0 0 5 8"><path d="M0 0v8l5-4z" fill="#666" /></svg></div>
      </div>
    </div>
  );
}

function StatusBar() {
  return (
    <div className="h-[23px] shrink-0 bg-[#f2f2f2] flex items-center text-[11.2px] text-[#444] border-b border-[#c6c6c6]">
      <span className="pl-[7px] pb-[2px]">Ready</span>
      <div className="ml-auto flex items-center h-full">
        <div className="w-[38px] h-full bg-[#c6c6c6] flex items-center justify-center">
          <svg width="14" height="14" viewBox="0 0 14 14"><path d="M.5 .5h13v13H.5zM5 .5v13M9 .5v13M.5 5h13M.5 9h13" fill="none" stroke="#666" /></svg>
        </div>
        <svg width="14" height="14" viewBox="0 0 14 14" className="ml-[12px]"><path d="M.5 .5h13v13H.5zM3 3.500h8M3 6h8M3 8.500h8M3 11h8" fill="none" stroke="#666" /></svg>
        <svg width="14" height="14" viewBox="0 0 14 14" className="ml-[24px]"><path d="M.5 .5h13v13H.5zM5 .5V7h4V.5" fill="none" stroke="#666" /></svg>
        <span className="ml-[19px] w-[6px] h-[2px] bg-[#666]" />
        <div className="ml-[4px] w-[99px] h-px bg-[#a8a8a8] relative"><span className="absolute left-[48px] -top-[6px] w-[5px] h-[13px] bg-[#777]" /></div>
        <svg width="7" height="7" viewBox="0 0 7 7" className="ml-[4px]"><path d="M3.500 0v7M0 3.500h7" stroke="#666" strokeWidth="1.500" /></svg>
        <span className="ml-[10px] w-[36px] pb-[2px]">107%</span>
      </div>
    </div>
  );
}

const Watermark = () => (
  <svg width="240" height="60" viewBox="0 0 240 60" className="absolute left-[845px] top-[970px] z-[5] pointer-events-none">
    <path d="M8 32c-2 14 8 21 30 21h14c14 0 16-8 14-26M62 6v28" fill="none" stroke="#c8c8c8" strokeOpacity="0.55" strokeWidth="8" />
    <path d="M90 34v10c0 7 6 9 14 9h90c14 0 20-6 20-20-12-12-30-14-42-14-16 0-22 10-26 24M160 7h18" fill="none" stroke="#c8c8c8" strokeOpacity="0.55" strokeWidth="8" />
    <path d="M207 0l7 7-7 7-7-7z" fill="#c8c8c8" fillOpacity="0.6" />
    <path d="M23 3l5 5-5 5-5-5zM38 3l5 5-5 5-5-5z" fill="#c8b088" fillOpacity="0.6" />
  </svg>
);

export default function App() {
  return (
    <div className="relative w-[1920px] h-[1041px] overflow-hidden flex flex-col bg-white font-['Noto_Sans',sans-serif]">
      <TitleBar />
      <Ribbon />
      <FormulaBar />
      <Sheet />
      <TabBar />
      <StatusBar />
      <Watermark />
    </div>
  );
}
